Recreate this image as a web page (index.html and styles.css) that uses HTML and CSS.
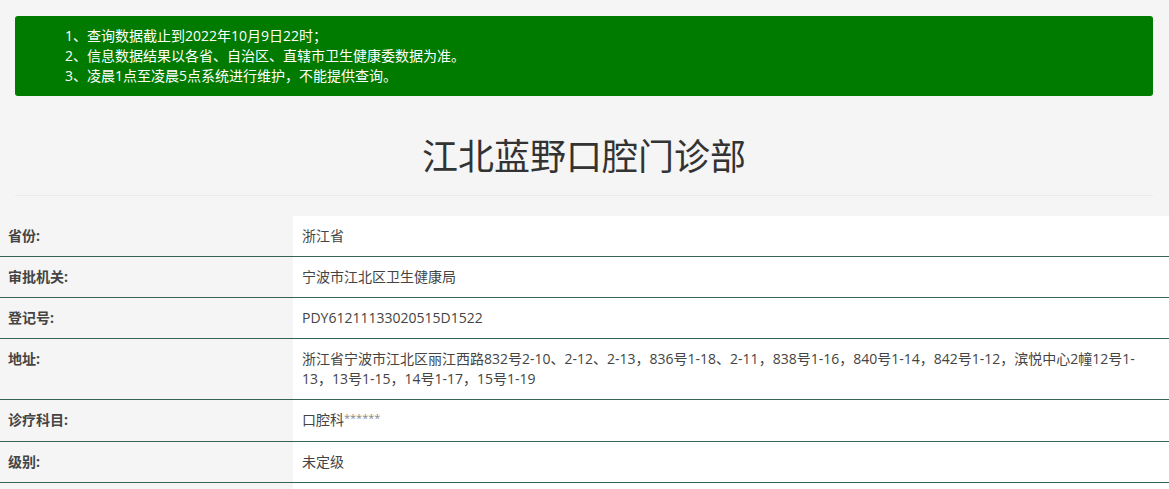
FILE: index.html
```html
<!DOCTYPE html>
<html lang="zh-CN">
<head>
<meta charset="utf-8">
<title>江北蓝野口腔门诊部</title>
<link rel="stylesheet" href="styles.css">
</head>
<body>
<div class="notice">
  <p>1、查询数据截止到2022年10月9日22时；</p>
  <p>2、信息数据结果以各省、自治区、直辖市卫生健康委数据为准。</p>
  <p>3、凌晨1点至凌晨5点系统进行维护，不能提供查询。</p>
</div>
<h1 class="title">江北蓝野口腔门诊部</h1>
<hr class="divider">
<table class="info">
  <tr><th>省份:</th><td>浙江省</td></tr>
  <tr><th>审批机关:</th><td>宁波市江北区卫生健康局</td></tr>
  <tr><th>登记号:</th><td>PDY61211133020515D1522</td></tr>
  <tr><th>地址:</th><td>浙江省宁波市江北区丽江西路832号2-10、2-12、2-13，836号1-18、2-11，838号1-16，840号1-14，842号1-12，滨悦中心2幢12号1-13，13号1-15，14号1-17，15号1-19</td></tr>
  <tr><th>诊疗科目:</th><td>口腔科<span class="stars">******</span></td></tr>
  <tr><th>级别:</th><td>未定级</td></tr>
  <tr><th>&nbsp;</th><td>&nbsp;</td></tr>
</table>
</body>
</html>
```
FILE: styles.css
```css
html, body {
  margin: 0;
  padding: 0;
}
body {
  background: #f5f5f5;
  font-family: "Open Sans", "Noto Sans CJK SC", sans-serif;
  font-size: 14px;
  color: #333;
}
.notice {
  margin: 16px 16px 0 15px;
  padding: 10px 15px 10px 50px;
  background: #007b00;
  border-radius: 3px;
  color: #fff;
  line-height: 20px;
}
.notice p {
  margin: 0;
}
.title {
  margin: 41px 16px 0 15px;
  font-size: 36px;
  font-weight: 400;
  line-height: 40px;
  text-align: center;
  color: #333;
}
.divider {
  margin: 18px 16px 20px 15px;
  border: 0;
  border-top: 1px solid #eaeaea;
  height: 0;
}
.info {
  width: 100%;
  border-collapse: collapse;
}
.info th,
.info td {
  padding: 10px 8px;
  line-height: 20px;
  text-align: left;
  vertical-align: top;
  border-bottom: 1px solid #336552;
}
.info th {
  width: 277px;
  background: #f5f5f5;
  font-weight: 700;
  color: #444;
}
.info td {
  background: #fff;
  padding-left: 9px;
  color: #444;
}
.stars {
  color: #888;
  font-size: 11px;
  position: relative;
  top: -3px;
}
```
